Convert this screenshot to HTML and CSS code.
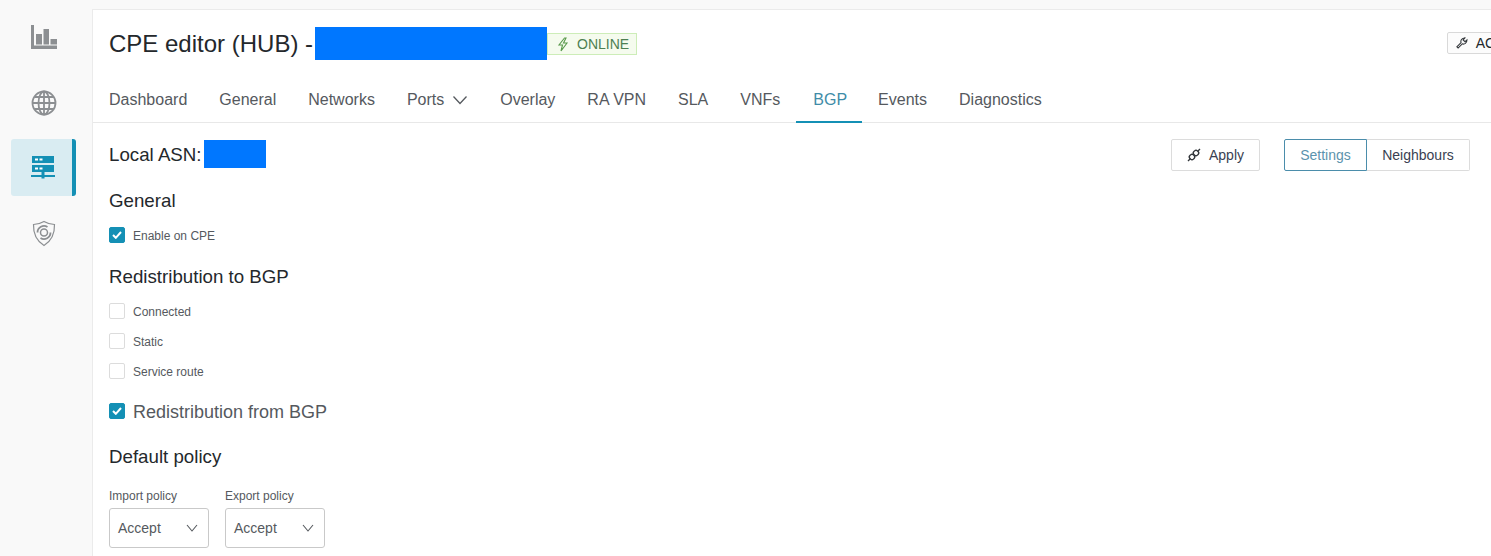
FILE: index.html
```html
<!DOCTYPE html>
<html lang="en">
<head>
<meta charset="utf-8">
<title>CPE editor</title>
<link rel="stylesheet" href="styles.css">
</head>
<body>
<div class="app">
  <nav class="sidebar">
    <a class="nav-item">
      <svg width="26" height="24" viewBox="0 0 26 24"><path d="M0 0h3v20.500h23V24H0zM5 9h6v10.500H5zM12.500 4H18v15.500h-5.500zM19.500 14H26v5.500h-6.500z" fill="#8c8f92"/></svg>
    </a>
    <a class="nav-item">
      <svg width="26" height="26" viewBox="0 0 26 26" fill="none" stroke="#8c8f92" stroke-width="1.800"><circle cx="13" cy="13" r="11.500"/><ellipse cx="13" cy="13" rx="5.500" ry="11.500"/><path d="M13 1.500v23M1.500 13h23M3.500 7h19M3.500 19h19"/></svg>
    </a>
    <a class="nav-item active">
      <svg width="26" height="26" viewBox="0 0 26 26"><path d="M2 1h22v7H2zM2 10h22v7H2zM11.500 17h3v3H25v2H14.500v1.500h-3V22H1v-2h10.500z" fill="#1490b5" fill-rule="evenodd"/><path d="M5 3.500h3v2H5zM9.500 3.500h3v2h-3zM5 12.500h3v2H5zM9.500 12.500h3v2h-3z" fill="#fff"/></svg>
    </a>
    <a class="nav-item">
      <svg width="24" height="27" viewBox="0 0 24 27" fill="none" stroke="#8c8f92"><path d="M12 1.500c3 1.800 6.500 2.800 10.500 3 .3 9-2.500 16-10.500 21C4 20.500 1.200 13.500 1.500 4.500c4-.2 7.500-1.200 10.500-3z" stroke-width="1.200"/><circle cx="12" cy="12.500" r="3.500" stroke-width="1.500"/><path d="M5.500 12.500a6.500 6.500 0 0 1 10-5.500M18.500 12.500a6.500 6.500 0 0 1-10 5.500" stroke-width="1.800"/></svg>
    </a>
  </nav>
  <main class="main">
    <header class="head">
      <h1 class="title">CPE editor (HUB) -</h1>
      <span class="redact redact-name"></span>
      <span class="status">
        <svg width="14" height="15" viewBox="0 0 14 15" fill="none" stroke="#5a9a4c" stroke-width="1.100"><path d="M8.500 1 3 8h3.500L5 14l6-8H7.500L10 1z"/></svg>
        ONLINE
      </span>
      <div class="clip">
        <button class="btn-action">
          <svg width="14" height="14" viewBox="0 0 14 14" fill="none" stroke="#33373b" stroke-width="1.300"><path d="M1 11.500 6 6.500c-1-2.500.8-5.500 4.500-5.500L8.500 3.300l2.200 2.200L13 3.500c0 3.700-3 5.500-5.500 4.500l-5 5z"/></svg>
          ACTIONS
        </button>
      </div>
    </header>
    <div class="tabs">
      <a class="tab">Dashboard</a>
      <a class="tab">General</a>
      <a class="tab">Networks</a>
      <a class="tab">Ports
        <svg class="tab-caret" width="16" height="10" viewBox="0 0 16 10" fill="none" stroke="#55595e" stroke-width="1.300"><path d="m1.500 1.500 6.500 7 6.500-7"/></svg>
      </a>
      <a class="tab">Overlay</a>
      <a class="tab">RA VPN</a>
      <a class="tab">SLA</a>
      <a class="tab">VNFs</a>
      <a class="tab current">BGP</a>
      <a class="tab">Events</a>
      <a class="tab">Diagnostics</a>
    </div>
    <section class="content">
      <div class="asn-row">
        <div class="asn"><span class="asn-label">Local ASN:</span><span class="redact redact-asn"></span></div>
        <div class="actions">
          <button class="btn-apply">
            <svg width="14" height="14" viewBox="0 0 14 14" fill="none" stroke="#33373b" stroke-width="1.400"><path d="M1 13l2.500-2.500M13 1l-2.500 2.500"/><rect x="2.500" y="6.500" width="5" height="5" rx="2" transform="rotate(-45 5 9)"/><rect x="6.500" y="2.500" width="5" height="5" rx="2" transform="rotate(-45 9 5)"/></svg>
            Apply
          </button>
          <div class="segments">
            <button class="seg seg-on">Settings</button>
            <button class="seg">Neighbours</button>
          </div>
        </div>
      </div>
      <h2 class="sec sec-general">General</h2>
      <label class="check check-first"><span class="box on"><svg width="10" height="8" viewBox="0 0 10 8" fill="none" stroke="#fff" stroke-width="2"><path d="m1 4 2.800 2.800L9 1"/></svg></span>Enable on CPE</label>
      <h2 class="sec sec-redis">Redistribution to BGP</h2>
      <div class="check-list">
        <label class="check"><span class="box"></span>Connected</label>
        <label class="check"><span class="box"></span>Static</label>
        <label class="check"><span class="box"></span>Service route</label>
      </div>
      <label class="check check-big"><span class="box on"><svg width="10" height="8" viewBox="0 0 10 8" fill="none" stroke="#fff" stroke-width="2"><path d="m1 4 2.800 2.800L9 1"/></svg></span>Redistribution from BGP</label>
      <h2 class="sec sec-policy">Default policy</h2>
      <div class="policies">
        <div class="field">
          <span class="field-label">Import policy</span>
          <div class="select">Accept<svg width="12" height="8" viewBox="0 0 12 8" fill="none" stroke="#55595e" stroke-width="1.100"><path d="m1 1 5 6 5-6"/></svg></div>
        </div>
        <div class="field">
          <span class="field-label">Export policy</span>
          <div class="select">Accept<svg width="12" height="8" viewBox="0 0 12 8" fill="none" stroke="#55595e" stroke-width="1.100"><path d="m1 1 5 6 5-6"/></svg></div>
        </div>
      </div>
    </section>
  </main>
</div>
</body>
</html>
```

FILE: styles.css
```css
* { box-sizing: border-box; }
html, body { margin: 0; height: 100%; overflow: hidden; }
body {
  background: #f9f9f9;
  font-family: "Liberation Sans", Arial, sans-serif;
  color: #24282c;
}
.app { display: flex; height: 556px; }

.sidebar {
  width: 92px;
  flex: none;
  padding: 8px 0 0 11px;
  display: flex;
  flex-direction: column;
}
.nav-item {
  width: 65px;
  height: 57px;
  margin-bottom: 8px;
  display: flex;
  align-items: center;
  justify-content: center;
  border-radius: 3px;
}
.nav-item.active {
  background: #d9ecf2;
  border-right: 4px solid #1490b5;
  padding-left: 3px;
  margin-bottom: 9px;
}
.nav-item:first-child { height: 58px; }
.nav-item:nth-child(2) { margin-bottom: 8px; }

.main {
  flex: 1;
  min-width: 0;
  margin-top: 9px;
  background: #fff;
  border-left: 1px solid #ebebeb;
  border-top: 1px solid #ebebeb;
  overflow: hidden;
}
.head {
  display: flex;
  align-items: center;
  height: 50px;
  margin-top: 8px;
  padding-left: 16px;
}
.title {
  margin: 0;
  padding-top: 2px;
  font-size: 24px;
  font-weight: 400;
  color: #24282c;
  white-space: nowrap;
}
.redact { display: block; background: #0077ff; }
.redact-name { width: 232px; height: 33px; margin-left: 2px; }
.status {
  display: flex;
  align-items: center;
  gap: 7px;
  height: 22px;
  width: 90px;
  margin-top: 2px;
  padding-left: 8px;
  background: #f5fbee;
  border: 1px solid #cdedb8;
  font-size: 14px;
  color: #4d7f52;
  white-space: nowrap;
}
.clip {
  width: 44px;
  margin-left: auto;
  overflow: hidden;
  flex: none;
}
.btn-action {
  display: flex;
  align-items: center;
  gap: 8px;
  height: 22px;
  width: 100px;
  padding: 0 8px;
  background: #fcfcfc;
  border: 1px solid #d9d9d9;
  border-radius: 2px;
  font: 14px "Liberation Sans", Arial, sans-serif;
  color: #24282c;
}

.tabs {
  display: flex;
  height: 53px;
  margin-top: 2px;
  padding-top: 11px;
  border-bottom: 1px solid #e8e8e8;
}
.tab {
  display: flex;
  align-items: center;
  gap: 8px;
  height: 42px;
  margin-bottom: -1px;
  padding: 0 16px 5px;
  font-size: 16px;
  color: #55595e;
  white-space: nowrap;
}
.tab.current {
  color: #3f8ca8;
  border-bottom: 2px solid #1490b5;
  padding: 2px 15px 5px 17px;
}

.content { padding: 16px 21px 0 16px; }
.asn-row {
  display: flex;
  justify-content: space-between;
  align-items: flex-start;
  height: 32px;
}
.asn {
  display: flex;
  align-items: center;
  gap: 2px;
  height: 28px;
  margin-top: 1px;
  font-size: 18.720px;
  color: #24282c;
}
.asn-label { padding-top: 2px; }
.redact-asn { width: 62px; height: 28px; }
.actions { display: flex; gap: 24px; }
.btn-apply, .seg {
  height: 32px;
  background: #fff;
  border: 1px solid #dcdcdc;
  font: 14px "Liberation Sans", Arial, sans-serif;
  color: #3a3f52;
  cursor: pointer;
}
.btn-apply {
  display: flex;
  align-items: center;
  gap: 8px;
  width: 89px;
  padding: 0 0 0 15px;
  border-radius: 2px;
}
.segments { display: flex; }
.seg { width: 103px; padding: 0; border-left: 0; border-radius: 0 2px 2px 0; }
.seg-on {
  width: 83px;
  color: #5b93ad;
  border: 1px solid #4b8dab;
  border-radius: 2px 0 0 2px;
}

.sec {
  margin: 0;
  font-size: 18.720px;
  font-weight: 400;
  line-height: 22px;
  color: #24282c;
}
.sec-general { margin-top: 19px; }
.sec-redis { margin-top: 19px; }
.sec-policy { margin-top: 23px; }

.check {
  display: flex;
  align-items: center;
  gap: 8px;
  height: 30px;
  font-size: 12px;
  color: #55595e;
}
.check-first { margin-top: 13px; height: 22px; }
.check-list { margin-top: 9px; }
.check-big { margin-top: 14px; height: 22px; font-size: 18px; }
.box {
  display: flex;
  align-items: center;
  justify-content: center;
  width: 16px;
  height: 16px;
  margin-top: -2px;
  background: #fff;
  border: 1px solid #dcdcdc;
  border-radius: 2px;
}
.box.on { background: #1490b5; border-color: #1490b5; }

.policies { display: flex; gap: 16px; margin-top: 21px; }
.field { display: flex; flex-direction: column; }
.field-label { font-size: 12px; line-height: 14px; color: #55595e; margin-bottom: 5px; }
.select {
  display: flex;
  align-items: center;
  justify-content: space-between;
  width: 100px;
  height: 40px;
  padding: 0 10px 0 8px;
  background: #fff;
  border: 1px solid #c9c9c9;
  border-radius: 3px;
  font-size: 14px;
  color: #55595e;
}
```
